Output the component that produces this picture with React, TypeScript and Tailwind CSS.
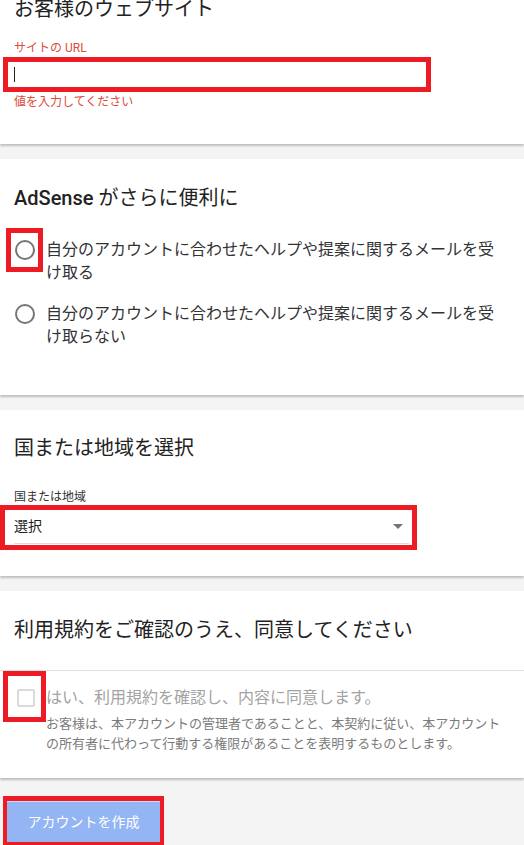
import React from 'react';

const RED_BOX = 'border-[5px] border-[#ed1c24]';

function Card({ className = '', children }: { className?: string; children: React.ReactNode }) {
  return (
    <div className={`flex flex-col bg-white shadow-[0_2px_2px_rgba(0,0,0,0.22)] ${className}`}>{children}</div>
  );
}

function Radio() {
  return <span className="block h-5 w-5 rounded-full border-2 border-[#757575] bg-white" />;
}

export default function App() {
  return (
    <div
      className="min-h-screen overflow-hidden bg-[#f4f4f4] text-[#212121]"
      style={{ fontFamily: 'Roboto, "Noto Sans CJK JP", sans-serif' }}
    >
      {/* お客様のウェブサイト */}
      <Card className="pb-[34px]">
        <h2 className="-mt-[5px] px-[14px] text-[20px] leading-[28px] font-normal text-[#222]">お客様のウェブサイト</h2>
        <label className="mt-[17px] px-[14px] text-[12px] leading-[16px] text-[#dd4b39]">サイトの URL</label>
        <div className={`mt-[1px] ml-[3px] flex h-[35px] w-[428px] items-center ${RED_BOX}`}>
          <span className="ml-[6px] block h-[15px] w-px bg-[#222]" />
        </div>
        <p className="mt-[2px] px-[14px] text-[12px] leading-[16px] text-[#dd4b39]">値を入力してください</p>
      </Card>

      {/* AdSense がさらに便利に */}
      <Card className="mt-[15px] pt-[25px] pb-[47px]">
        <h2 className="px-[14px] text-[20px] leading-[28px] text-[#222]">
          <span className="font-medium">AdSense</span> がさらに便利に
        </h2>
        <div className="mt-4 flex items-start pr-4 pl-[6px]">
          <div className={`flex h-[44px] w-[37px] shrink-0 items-center justify-center ${RED_BOX}`}>
            <Radio />
          </div>
          <p className="mt-[10px] ml-[3px] text-[16px] leading-[23px] text-[#333]">
            自分のアカウントに合わせたヘルプや提案に関するメールを受け取る
          </p>
        </div>
        <div className="mt-2 flex items-start pr-4 pl-[6px]">
          <div className="flex h-[44px] w-[37px] shrink-0 items-center justify-center border-[5px] border-transparent">
            <Radio />
          </div>
          <p className="mt-[10px] ml-[3px] text-[16px] leading-[23px] text-[#333]">
            自分のアカウントに合わせたヘルプや提案に関するメールを受け取らない
          </p>
        </div>
      </Card>

      {/* 国または地域を選択 */}
      <Card className="mt-[15px] pt-[24px] pb-[26px]">
        <h2 className="px-[14px] text-[20px] leading-[28px] text-[#222]">国または地域を選択</h2>
        <label className="mt-[27px] px-[14px] text-[12px] leading-[16px] text-[#333]">国または地域</label>
        <div className={`h-[45px] w-[417px] ${RED_BOX}`}>
          <div className="mr-[3px] ml-[9px] flex h-[34px] items-center justify-between border-b border-[#dcdcdc] pb-[1px]">
            <span className="text-[14px] leading-[20px] text-[#222]">選択</span>
            <svg width="10" height="5" viewBox="0 0 10 5" className="mr-[6px]">
              <path d="M0 0h10L5 5z" fill="#757575" />
            </svg>
          </div>
        </div>
      </Card>

      {/* 利用規約 */}
      <Card className="mt-[15px] pt-[25px] pb-[24px]">
        <h2 className="px-[14px] text-[20px] leading-[28px] text-[#222]">利用規約をご確認のうえ、同意してください</h2>
        <div className="mt-[26px] border-t border-[#e0e0e0]" />
        <div className="flex items-start pr-4 pl-[3px]">
          <div className={`h-[51px] w-[43px] shrink-0 ${RED_BOX}`}>
            <span className="mt-[13px] ml-[9px] block h-[18px] w-[18px] rounded-[2px] border-2 border-[#dadada] bg-white" />
          </div>
          <div className="mt-[15px]">
            <p className="text-[16px] leading-[23px] text-[#a3a3a3]">はい、利用規約を確認し、内容に同意します。</p>
            <p className="mt-[5px] text-[13px] leading-[20px] text-[#7b7b7b]">
              お客様は、本アカウントの管理者であることと、本契約に従い、本アカウントの所有者に代わって行動する権限があることを表明するものとします。
            </p>
          </div>
        </div>
      </Card>

      <div className="mt-[18px] ml-[3px] w-[161px] border-x-4 border-t-[5px] border-b-4 border-[#ed1c24]">
        <button
          type="button"
          disabled
          className="flex h-[41px] w-full items-center justify-center border-t border-[#c9dafb] bg-[#93b5f3] text-[14px] text-white"
        >
          アカウントを作成
        </button>
      </div>
    </div>
  );
}
